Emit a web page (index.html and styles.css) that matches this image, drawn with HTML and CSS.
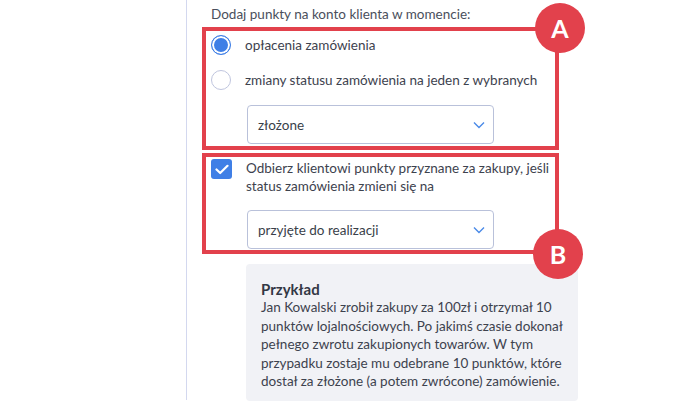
FILE: index.html
```html
<!DOCTYPE html>
<html lang="pl">
<head>
<meta charset="utf-8">
<title>Punkty lojalnościowe</title>
<link rel="stylesheet" href="styles.css">
</head>
<body>
<div class="page">
  <div class="panel">
    <p class="title">Dodaj punkty na konto klienta w momencie:</p>

    <div class="mark mark-a">
      <label class="row">
        <span class="radio checked"></span>
        <span class="label">opłacenia zamówienia</span>
      </label>
      <label class="row">
        <span class="radio"></span>
        <span class="label">zmiany statusu zamówienia na jeden z wybranych</span>
      </label>
      <div class="select">
        <span>złożone</span>
        <svg class="chev" width="12" height="8" viewBox="0 0 12 8"><path d="M1 1.5 L6 6.5 L11 1.5" fill="none" stroke="#4a8ae8" stroke-width="1.4"/></svg>
      </div>
      <span class="badge badge-a">A</span>
    </div>

    <div class="mark mark-b">
      <label class="row row-check">
        <span class="check"><svg width="14" height="11" viewBox="0 0 14 11"><path d="M1.5 5.5 L5.2 9 L12.5 1.8" fill="none" stroke="#fff" stroke-width="2.2" stroke-linecap="round" stroke-linejoin="round"/></svg></span>
        <span class="label two">Odbierz klientowi punkty przyznane za zakupy, jeśli status zamówienia zmieni się na</span>
      </label>
      <div class="select">
        <span>przyjęte do realizacji</span>
        <svg class="chev" width="12" height="8" viewBox="0 0 12 8"><path d="M1 1.5 L6 6.5 L11 1.5" fill="none" stroke="#4a8ae8" stroke-width="1.4"/></svg>
      </div>
      <span class="badge badge-b">B</span>
    </div>

    <div class="example">
      <h4>Przykład</h4>
      <p>Jan Kowalski zrobił zakupy za 100zł i otrzymał 10 punktów lojalnościowych. Po jakimś czasie dokonał pełnego zwrotu zakupionych towarów. W tym przypadku zostaje mu odebrane 10 punktów, które dostał za złożone (a potem zwrócone) zamówienie.</p>
    </div>
  </div>
</div>
</body>
</html>
```
FILE: styles.css
```css
* { box-sizing: border-box; }
html, body { margin: 0; padding: 0; background: #fff; }
body {
  font-family: "Source Sans Pro", "Lato", sans-serif;
  color: #3d424e;
  width: 699px;
  height: 407px;
  overflow: hidden;
}
.page {
  padding-left: 186px;
}
.panel {
  border-left: 1px solid #d3d8ef;
  padding-left: 15px;
  height: 400px;
  width: 420px;
}
.title {
  margin: 0;
  padding: 6px 0 0 9px;
  height: 27px;
  font-size: 13.5px;
  line-height: 16px;
  color: #4a4f5c;
}
.mark {
  position: relative;
  width: 357px;
  border: 4px solid #e2414c;
  padding-left: 5px;
}
.mark-a {
  padding-top: 4px;
  padding-bottom: 2px;
  display: flex;
  flex-direction: column;
  gap: 15px;
}
.mark-b {
  margin-top: 3px;
  padding-top: 2px;
  padding-bottom: 1px;
  display: flex;
  flex-direction: column;
  gap: 15px;
}
.row {
  display: flex;
  align-items: center;
  gap: 14px;
  height: 20px;
  font-size: 13.5px;
  color: #3d424e;
}
.row-check {
  height: auto;
  align-items: flex-start;
}
.label.two {
  line-height: 18px;
  width: 310px;
}
.radio {
  width: 20px;
  height: 20px;
  border-radius: 50%;
  border: 1px solid #bfc5de;
  background: #fff;
  flex: none;
}
.radio.checked {
  border: 1.5px solid #3f7fe6;
  background: #3f7fe6;
  box-shadow: inset 0 0 0 2px #fff;
}
.check {
  width: 21px;
  height: 20px;
  border-radius: 3px;
  background: #3f7fe6;
  flex: none;
  display: flex;
  align-items: center;
  justify-content: center;
}
.select {
  margin-left: 36px;
  width: 247px;
  height: 39px;
  border: 1px solid #b9c1da;
  border-radius: 4px;
  display: flex;
  align-items: center;
  justify-content: space-between;
  padding: 0 8px 0 10px;
  font-size: 13.5px;
  color: #3a3f4a;
}
.badge {
  position: absolute;
  width: 50px;
  height: 50px;
  border-radius: 50%;
  background: #e2414c;
  color: #fff;
  font-family: "Lato", "Open Sans", sans-serif;
  font-weight: 700;
  font-size: 25px;
  display: flex;
  align-items: center;
  justify-content: center;
  z-index: 2;
}
.badge-a { right: -30px; top: -28px; }
.badge-b { right: -28px; bottom: -29px; }
.example {
  margin: 10px 0 0 44px;
  width: 332px;
  height: 137px;
  background: #f1f2f6;
  border-radius: 4px;
  padding: 16px 14px 0 15px;
}
.example h4 {
  margin: 0;
  font-size: 15px;
  line-height: 18px;
  font-weight: 700;
  color: #333845;
}
.example p {
  margin: 0;
  font-size: 13.5px;
  line-height: 18.5px;
  color: #3d424e;
}
```
